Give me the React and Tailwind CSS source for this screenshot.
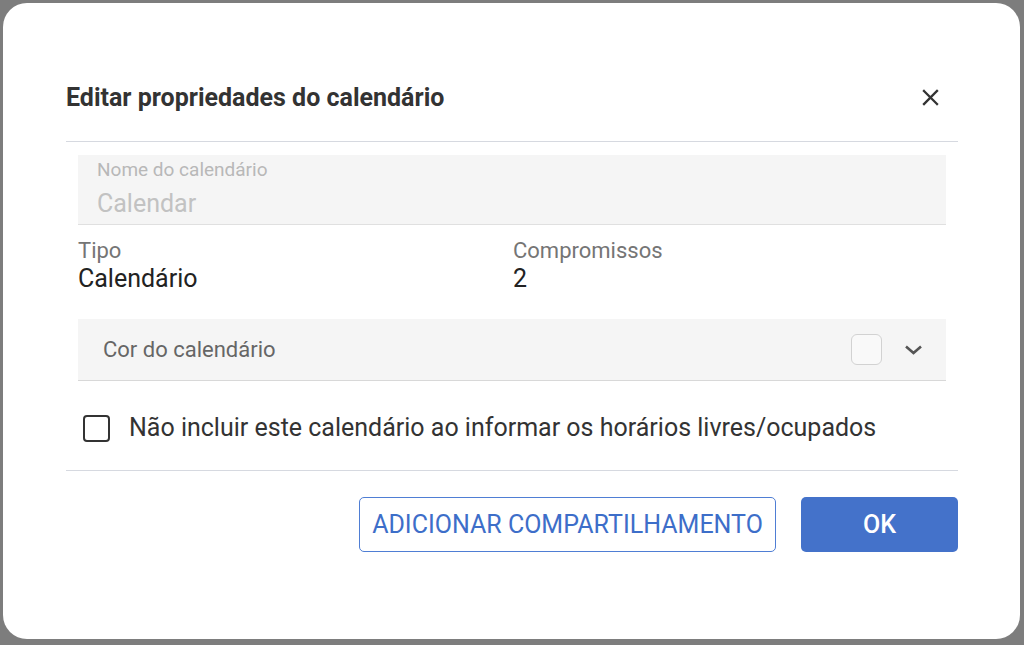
import React from "react";

export default function App() {
  return (
    <div
      className="w-[1024px] h-[645px] bg-[#7d7d7d] pt-[3px] pl-[3px] pr-[4px] pb-[6px]"
      style={{ fontFamily: "Roboto, 'Liberation Sans', sans-serif" }}
    >
      <div className="h-full w-full bg-white rounded-[24px] pl-[63px] pr-[62px] pt-[79px] flex flex-col">
        <div className="flex items-center justify-between h-[30px]">
          <h1 className="text-[25px] font-bold text-[#333333] leading-none">
            Editar propriedades do calendário
          </h1>
          <svg width="17" height="17" viewBox="0 0 17 17" className="mr-[19px]">
            <path d="M2 2L15 15M15 2L2 15" stroke="#333" strokeWidth="2.3" strokeLinecap="square" />
          </svg>
        </div>
        <div className="h-px bg-[#d6d9e0] mt-[29px]" />
        <div className="px-[12px] pt-[13px]">
          <div className="bg-[#f5f5f5] border-b border-[#e0e0e0] h-[70px] px-[19px] pt-[4px]">
            <div className="text-[19px] text-[#b8b8b8] leading-[22px]">Nome do calendário</div>
            <div className="text-[25px] text-[#c2c2c2] leading-[28px] mt-[9px]">Calendar</div>
          </div>
          <div className="grid grid-cols-2 mt-[13px]">
            <div>
              <div className="text-[22px] text-[#757575] leading-[26px]">Tipo</div>
              <div className="text-[25px] text-[#222] leading-[30px]">Calendário</div>
            </div>
            <div className="pl-[1px]">
              <div className="text-[22px] text-[#757575] leading-[26px]">Compromissos</div>
              <div className="text-[25px] text-[#222] leading-[30px]">2</div>
            </div>
          </div>
          <div className="bg-[#f5f5f5] border-b border-[#d8d8d8] h-[62px] mt-[25px] flex items-center pl-[25px] pr-[23px]">
            <div className="text-[22px] text-[#666] flex-1">Cor do calendário</div>
            <div className="w-[31px] h-[31px] border border-[#d2d2d2] rounded-[6px] bg-white/40" />
            <svg width="19" height="12" viewBox="0 0 19 12" className="ml-[22px]">
              <path d="M2 2.5L9.5 9L17 2.5" stroke="#555" strokeWidth="2.6" fill="none" />
            </svg>
          </div>
          <div className="flex items-center mt-[32px] pl-[5px]">
            <div className="w-[27px] h-[27px] border-[2.5px] border-[#333] rounded-[4px]" />
            <div className="text-[25px] text-[#333] ml-[19px] leading-[30px] whitespace-nowrap">
              Não incluir este calendário ao informar os horários livres/ocupados
            </div>
          </div>
        </div>
        <div className="h-px bg-[#d6d9e0] mt-[27px]" />
        <div className="flex justify-end gap-[25px] mt-[26px]">
          <button className="h-[55px] w-[417px] border-[1.5px] border-[#4f7ed4] rounded-[5px] text-[25px] text-[#3d6ec9] bg-white whitespace-nowrap">
            ADICIONAR COMPARTILHAMENTO
          </button>
          <button className="h-[55px] w-[157px] bg-[#4472ca] rounded-[5px] text-[25px] text-white font-medium">
            OK
          </button>
        </div>
      </div>
    </div>
  );
}
